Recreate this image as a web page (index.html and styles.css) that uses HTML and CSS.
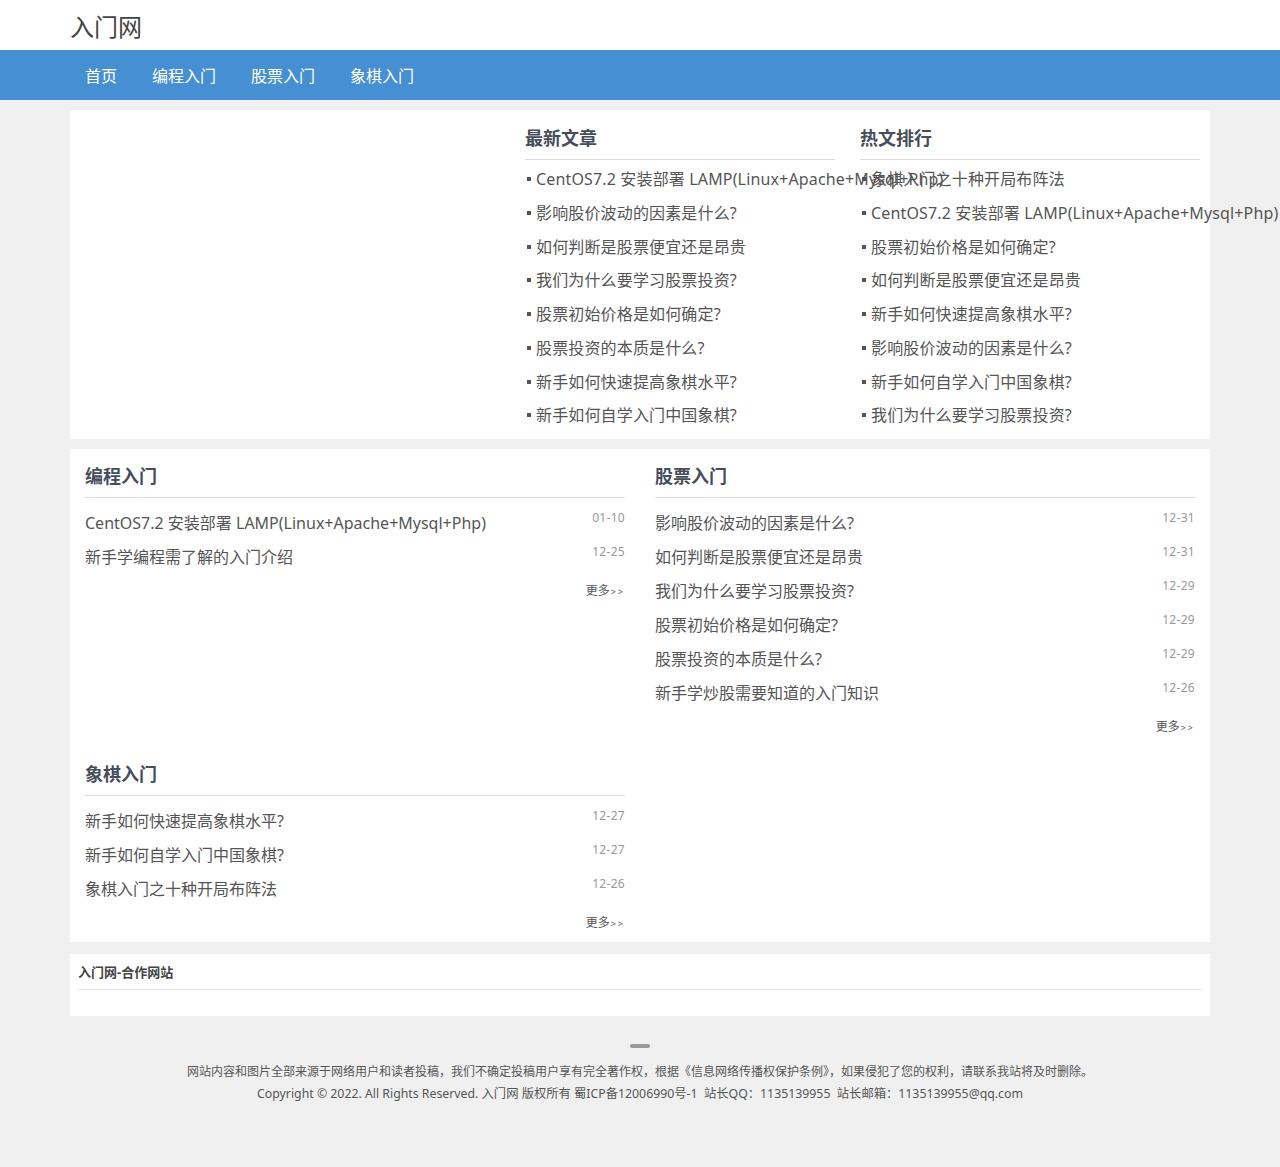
FILE: index.html
```html
<!DOCTYPE html>
<html lang="zh-CN">
<head>
<meta charset="utf-8">
<title>入门网</title>
<link rel="stylesheet" href="styles.css">
</head>
<body>
<header class="top">
  <div class="container"><a class="logo" href="#">入门网</a></div>
</header>
<nav class="nav">
  <div class="container">
    <a href="#">首页</a><a href="#">编程入门</a><a href="#">股票入门</a><a href="#">象棋入门</a>
  </div>
</nav>

<div class="container card hot-card">
  <div class="slide"></div>
  <div class="side-col col-new">
    <h3 class="sec-title">最新文章</h3>
    <ul class="dot-list">
      <li>CentOS7.2 安装部署 LAMP(Linux+Apache+Mysql+Php)</li>
      <li>影响股价波动的因素是什么?</li>
      <li>如何判断是股票便宜还是昂贵</li>
      <li>我们为什么要学习股票投资?</li>
      <li>股票初始价格是如何确定?</li>
      <li>股票投资的本质是什么?</li>
      <li>新手如何快速提高象棋水平?</li>
      <li>新手如何自学入门中国象棋?</li>
    </ul>
  </div>
  <div class="side-col col-hot">
    <h3 class="sec-title">热文排行</h3>
    <ul class="dot-list">
      <li>象棋入门之十种开局布阵法</li>
      <li>CentOS7.2 安装部署 LAMP(Linux+Apache+Mysql+Php)</li>
      <li>股票初始价格是如何确定?</li>
      <li>如何判断是股票便宜还是昂贵</li>
      <li>新手如何快速提高象棋水平?</li>
      <li>影响股价波动的因素是什么?</li>
      <li>新手如何自学入门中国象棋?</li>
      <li>我们为什么要学习股票投资?</li>
    </ul>
  </div>
</div>

<div class="container card cat-card">
  <section class="cat">
    <h3 class="sec-title">编程入门</h3>
    <ul class="date-list">
      <li><span class="date">01-10</span>CentOS7.2 安装部署 LAMP(Linux+Apache+Mysql+Php)</li>
      <li><span class="date">12-25</span>新手学编程需了解的入门介绍</li>
    </ul>
    <div class="more"><a href="#">更多<span class="arr">&gt;&gt;</span></a></div>
  </section>
  <section class="cat">
    <h3 class="sec-title">股票入门</h3>
    <ul class="date-list">
      <li><span class="date">12-31</span>影响股价波动的因素是什么?</li>
      <li><span class="date">12-31</span>如何判断是股票便宜还是昂贵</li>
      <li><span class="date">12-29</span>我们为什么要学习股票投资?</li>
      <li><span class="date">12-29</span>股票初始价格是如何确定?</li>
      <li><span class="date">12-29</span>股票投资的本质是什么?</li>
      <li><span class="date">12-26</span>新手学炒股需要知道的入门知识</li>
    </ul>
    <div class="more"><a href="#">更多<span class="arr">&gt;&gt;</span></a></div>
  </section>
  <section class="cat">
    <h3 class="sec-title">象棋入门</h3>
    <ul class="date-list">
      <li><span class="date">12-27</span>新手如何快速提高象棋水平?</li>
      <li><span class="date">12-27</span>新手如何自学入门中国象棋?</li>
      <li><span class="date">12-26</span>象棋入门之十种开局布阵法</li>
    </ul>
    <div class="more"><a href="#">更多<span class="arr">&gt;&gt;</span></a></div>
  </section>
</div>

<div class="container card links-card">
  <h4 class="links-title">入门网-合作网站</h4>
  <div class="links-body"></div>
</div>

<footer class="footer">
  <div class="bar"></div>
  <p class="f1">网站内容和图片全部来源于网络用户和读者投稿，我们不确定投稿用户享有完全著作权，根据《信息网络传播权保护条例》，如果侵犯了您的权利，请联系我站将及时删除。</p>
  <p class="f2">Copyright © 2022. All Rights Reserved. 入门网 版权所有 蜀ICP备12006990号-1&nbsp;&nbsp;站长QQ：1135139955&nbsp;&nbsp;站长邮箱：1135139955@qq.com</p>
</footer>
</body>
</html>
```

FILE: styles.css
```css
* { box-sizing: border-box; }
html, body { margin: 0; padding: 0; }
body {
  background: #f0f0f0;
  font-family: "Noto Sans", "Noto Sans CJK SC", sans-serif;
  color: #555;
}
a { color: inherit; text-decoration: none; }
ul { list-style: none; margin: 0; padding: 0; }
h3, h4, p { margin: 0; }

.container { width: 1140px; margin: 0 auto; }

.top { background: #fff; height: 50px; }
.logo {
  display: block;
  font-size: 24px;
  line-height: 54px;
  color: #444;
}

.nav { background: #468fd2; height: 50px; }
.nav .container { display: flex; }
.nav a {
  color: #fff;
  font-size: 16px;
  line-height: 52px;
  margin-left: 35px;
}
.nav a:first-child { margin-left: 15px; }

.card { background: #fff; }

.hot-card {
  margin-top: 10px;
  display: flex;
  height: 329px;
  padding: 13px 10px 7px 0;
}
.slide { width: 440px; flex: none; }
.side-col { flex: none; }
.col-new { width: 310px; margin-left: 15px; }
.col-hot { width: 340px; margin-left: 25px; }

.sec-title {
  font-size: 18px;
  font-weight: bold;
  color: #464d5b;
  line-height: 30px;
  padding-bottom: 6px;
  border-bottom: 1px solid #ddd;
}

.dot-list { margin-top: 3px; }
.dot-list li {
  height: 33.75px;
  line-height: 33.75px;
  font-size: 16px;
  white-space: nowrap;
  color: #555;
  letter-spacing: 0.15px;
}
.dot-list li::before {
  content: "";
  display: inline-block;
  width: 4px;
  height: 4px;
  background: #555;
  vertical-align: middle;
  margin: 0 5px 3px 2px;
}

.cat-card {
  margin-top: 10px;
  padding: 12px 15px 2px;
  display: grid;
  grid-template-columns: 540px 540px;
  column-gap: 30px;
  row-gap: 15px;
  align-items: start;
}
.date-list { margin-top: 8px; }
.date-list li {
  height: 34px;
  line-height: 34px;
  font-size: 16px;
  white-space: nowrap;
  color: #555;
}
.date {
  float: right;
  font-size: 12px;
  line-height: 24px;
  color: #999;
  letter-spacing: 0.3px;
}
.more {
  height: 34px;
  line-height: 34px;
  text-align: right;
  font-size: 12px;
  color: #555;
}
.arr {
  font-size: 9px;
  letter-spacing: 2px;
  margin-left: 1px;
}

.links-card {
  margin-top: 12px;
  padding: 8px 8px 0;
  height: 62px;
}
.links-title {
  font-size: 13px;
  font-weight: bold;
  color: #444;
  line-height: 20px;
  padding-bottom: 7px;
  border-bottom: 1px solid #e5e5e5;
}

.footer {
  padding-top: 28px;
  text-align: center;
  color: #555;
}
.bar {
  width: 20px;
  height: 4px;
  border-radius: 2px;
  background: #999;
  margin: 0 auto 14px;
}
.f1 { font-size: 12px; line-height: 20px; }
.f2 { font-size: 12.3px; line-height: 24px; }
```
